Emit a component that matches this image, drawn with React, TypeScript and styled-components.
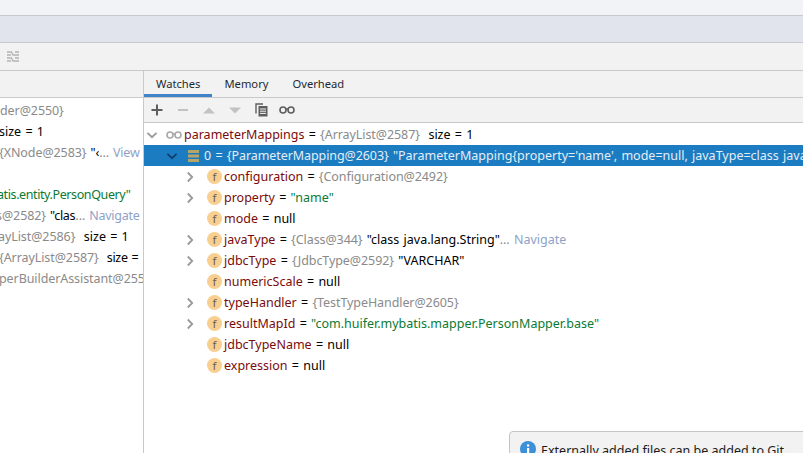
import React from "react";
import styled, { createGlobalStyle } from "styled-components";

const Global = createGlobalStyle`
  html, body { margin: 0; padding: 0; background: #fff; }
  body { width: 803px; height: 453px; overflow: hidden; font-family: "Noto Sans", "Open Sans", sans-serif; }
`;

const Page = styled.div`
  position: relative;
  width: 803px;
  height: 453px;
  overflow: hidden;
  display: flex;
  flex-direction: column;
`;
const TopStrip = styled.div`
  height: 15px;
  background: #f2f3f6;
  border-bottom: 1px solid #c8c9cc;
`;
const TabStrip = styled.div`
  height: 26px;
  background: #e1e4ec;
  border-bottom: 1px solid #c8c9cc;
`;
const DebugBar = styled.div`
  height: 27px;
  background: #f2f2f2;
  border-bottom: 1px solid #c8c9cc;
  display: flex;
  align-items: center;
  padding-left: 7px;
`;
const Panels = styled.div`
  flex: 1;
  display: flex;
  min-height: 0;
`;
const LeftPanel = styled.div`
  width: 143px;
  flex: none;
  border-right: 1px solid #c8c9cc;
  display: flex;
  flex-direction: column;
  overflow: hidden;
`;
const LeftHead = styled.div`
  height: 26px;
  flex: none;
  background: #f2f2f2;
  border-bottom: 1px solid #c8c9cc;
`;
const LeftList = styled.div`
  padding-top: 2px;
  display: flex;
  flex-direction: column;
`;
const LeftRow = styled.div<{ $shift: number; $tight?: number }>`
  height: 21px;
  line-height: 21px;
  white-space: pre;
  font-size: 12.5px;
  word-spacing: 1px;
  color: #000;
  margin-left: ${(p) => p.$shift}px;
  letter-spacing: ${(p) => -(p.$tight ?? 0)}px;
`;
const RightPanel = styled.div`
  flex: 1;
  min-width: 0;
  display: flex;
  flex-direction: column;
`;
const Tabs = styled.div`
  height: 26px;
  flex: none;
  display: flex;
  background: #f2f2f2;
  border-bottom: 1px solid #c8c9cc;
`;
const Tab = styled.div<{ $active?: boolean }>`
  padding: 0 12px;
  line-height: 26px;
  height: 26px;
  font-size: 11.2px;
  color: #1e2a33;
  box-sizing: content-box;
  box-shadow: ${(p) => (p.$active ? "inset 0 -3px 0 #4083c9" : "none")};
`;
const Toolbar = styled.div`
  height: 24px;
  flex: none;
  display: flex;
  background: #f2f2f2;
  border-bottom: 1px solid #c8c9cc;
`;
const ToolButton = styled.div`
  width: 26px;
  height: 24px;
  display: flex;
  align-items: center;
  justify-content: center;
`;
const Tree = styled.div`
  display: flex;
  flex-direction: column;
  padding-top: 1px;
`;
const Row = styled.div<{ $depth: number; $selected?: boolean }>`
  height: 21px;
  display: flex;
  align-items: center;
  white-space: pre;
  font-size: 12.5px;
  word-spacing: 1px;
  color: ${(p) => (p.$selected ? "#e4eef7" : "#000")};
  background: ${(p) => (p.$selected ? "#1b7cc2" : "transparent")};
  padding-left: ${(p) => p.$depth}px;
`;
const ArrowSlot = styled.div<{ $gap: number }>`
  width: 14px;
  height: 21px;
  flex: none;
  display: flex;
  align-items: center;
  justify-content: center;
  margin-right: ${(p) => p.$gap}px;
`;
const IconSlot = styled.div<{ $gap: number }>`
  flex: none;
  display: flex;
  align-items: center;
  margin-right: ${(p) => p.$gap}px;
`;
const FieldIcon = styled.div`
  width: 15px;
  height: 15px;
  border-radius: 50%;
  background: #f8cf8e;
  color: #6e6054;
  font-size: 11.5px;
  line-height: 15px;
  text-align: center;
`;
const Name = styled.span`
  color: #7a0b0b;
`;
const Gray = styled.span<{ $on?: boolean }>`
  color: ${(p) => (p.$on ? "#e4eef7" : "#8a8a8a")};
  letter-spacing: -0.08px;
`;
const Green = styled.span`
  color: #0b7a33;
`;
const Link = styled.span`
  color: #8ea2c8;
`;
const Notice = styled.div`
  position: absolute;
  left: 509px;
  top: 431px;
  width: 320px;
  height: 40px;
  background: #f2f2f2;
  border: 1px solid #c4c4c4;
  border-radius: 4px;
  display: flex;
  align-items: flex-start;
  padding: 9px 0 0 10px;
  gap: 5px;
  font-size: 12.5px;
  line-height: 20px;
  color: #1c1c1c;
  white-space: nowrap;
`;

const Chevron = ({ down }: { down?: boolean }) => (
  <svg width="12" height="12" viewBox="0 0 12 12" fill="none" stroke="#9a9a9a" strokeWidth="1.8">
    {down ? <path d="M1.5 3.8 6 8.2l4.5-4.4" /> : <path d="M3.8 1.5 8.2 6l-4.4 4.5" />}
  </svg>
);
const ChevronSel = () => (
  <svg width="12" height="12" viewBox="0 0 12 12" fill="none" stroke="#0f3f6a" strokeWidth="1.8">
    <path d="M1.5 3.8 6 8.2l4.5-4.4" />
  </svg>
);
const Glasses = ({ color }: { color: string }) => (
  <svg width="16" height="10" viewBox="0 0 16 10" fill="none" stroke={color} strokeWidth="1.6">
    <rect x="1" y="2" width="6" height="6" rx="3" />
    <rect x="9" y="2" width="6" height="6" rx="3" />
    <path d="M7 4h2" />
  </svg>
);
const ListIcon = () => (
  <svg width="11" height="12" viewBox="0 0 11 12" fill="#b5a569">
    <rect x="0" y="0" width="11" height="3" />
    <rect x="0" y="4.5" width="11" height="3" />
    <rect x="0" y="9" width="11" height="3" />
  </svg>
);
const DebugIcon = () => (
  <svg width="12" height="11" viewBox="0 0 12 11" fill="none" stroke="#b4b4b4" strokeWidth="1.3">
    <path d="M0 1h4.5l1.5 3H12M0 4h4M8 1h4M0 7h4.5L6 10h6M0 10h4M8 7h4" />
  </svg>
);
const Plus = () => (
  <svg width="12" height="12" viewBox="0 0 12 12" fill="#5e5e5e"><rect x="0.5" y="5" width="11" height="2" /><rect x="5" y="0.5" width="2" height="11" /></svg>
);
const Minus = () => (
  <svg width="12" height="12" viewBox="0 0 12 12" fill="#c2c2c2"><rect x="1" y="5" width="10" height="2" /></svg>
);
const Up = () => (
  <svg width="14" height="8" viewBox="0 0 14 8" fill="#c2c2c2"><path d="M7 1.5 13 7.5H1z" /></svg>
);
const Down = () => (
  <svg width="14" height="8" viewBox="0 0 14 8" fill="#c2c2c2"><path d="M7 7.5 13 1.5H1z" /></svg>
);
const Copy = () => (
  <svg width="13" height="14" viewBox="0 0 13 14" fill="none" stroke="#5e5e5e">
    <path d="M1 10.5V1h7" strokeWidth="1.4" />
    <rect x="3.5" y="3" width="9" height="10.5" fill="#5e5e5e" stroke="none" />
    <path d="M5 6h6M5 8.2h6M5 10.4h6" stroke="#f2f2f2" strokeWidth="1" />
  </svg>
);
const Info = () => (
  <svg width="16" height="16" viewBox="0 0 16 16">
    <circle cx="8" cy="8" r="8" fill="#3d8fd8" />
    <rect x="7" y="7" width="2.2" height="6" fill="#fff" />
    <rect x="7" y="3.4" width="2.2" height="2.2" fill="#fff" />
  </svg>
);

const Field = ({ open, children }: { open?: boolean; children: React.ReactNode }) => (
  <Row $depth={39}>
    <ArrowSlot $gap={10}>{open ? <Chevron /> : null}</ArrowSlot>
    <IconSlot $gap={2}><FieldIcon>f</FieldIcon></IconSlot>
    <span>{children}</span>
  </Row>
);

export default function App() {
  return (
    <Page>
      <Global />
      <TopStrip />
      <TabStrip />
      <DebugBar><DebugIcon /></DebugBar>
      <Panels>
        <LeftPanel>
          <LeftHead />
          <LeftList>
            <LeftRow $shift={0}><Gray>der@2550{"}"}</Gray></LeftRow>
            <LeftRow $shift={-1}>size = 1</LeftRow>
            <LeftRow $shift={-1} $tight={0.2}><Gray>{"{XNode@2583}"}</Gray> {"\"‹"}<Gray>...</Gray> <Link>View</Link></LeftRow>
            <LeftRow $shift={0}> </LeftRow>
            <LeftRow $shift={-3} $tight={0.4}><Green>atis.entity.PersonQuery"</Green></LeftRow>
            <LeftRow $shift={-4} $tight={0.25}><Gray>s@2582{"}"}</Gray> "clas<Gray>...</Gray> <Link>Navigate</Link></LeftRow>
            <LeftRow $shift={-2}><Gray>ayList@2586{"}"}</Gray>  size = 1</LeftRow>
            <LeftRow $shift={-1} $tight={0.3}><Gray>{"{ArrayList@2587}"}</Gray>  size = </LeftRow>
            <LeftRow $shift={-1}><Gray>perBuilderAssistant@2550{"}"}</Gray></LeftRow>
          </LeftList>
        </LeftPanel>
        <RightPanel>
          <Tabs>
            <Tab $active>Watches</Tab>
            <Tab>Memory</Tab>
            <Tab>Overhead</Tab>
          </Tabs>
          <Toolbar>
            <ToolButton><Plus /></ToolButton>
            <ToolButton><Minus /></ToolButton>
            <ToolButton><Up /></ToolButton>
            <ToolButton><Down /></ToolButton>
            <ToolButton><Copy /></ToolButton>
            <ToolButton><Glasses color="#5e5e5e" /></ToolButton>
          </Toolbar>
          <Tree>
            <Row $depth={1}>
              <ArrowSlot $gap={7}><Chevron down /></ArrowSlot>
              <IconSlot $gap={2}><Glasses color="#a8a8a8" /></IconSlot>
              <span><Name>parameterMappings</Name> = <Gray>{"{ArrayList@2587}"}</Gray>  size = 1</span>
            </Row>
            <Row $depth={21} $selected>
              <ArrowSlot $gap={9}><ChevronSel /></ArrowSlot>
              <IconSlot $gap={5}><ListIcon /></IconSlot>
              <span>0 = <Gray $on>{"{ParameterMapping@2603}"}</Gray> "ParameterMapping{"{"}property='name', mode=null, javaType=class java.lang.String</span>
            </Row>
            <Field open><Name>configuration</Name> = <Gray>{"{Configuration@2492}"}</Gray></Field>
            <Field open><Name>property</Name> = <Green>"name"</Green></Field>
            <Field><Name>mode</Name> = null</Field>
            <Field open><Name>javaType</Name> = <Gray>{"{Class@344}"}</Gray> "class java.lang.String"<Gray>...</Gray> <Link>Navigate</Link></Field>
            <Field open><Name>jdbcType</Name> = <Gray>{"{JdbcType@2592}"}</Gray> "VARCHAR"</Field>
            <Field><Name>numericScale</Name> = null</Field>
            <Field open><Name>typeHandler</Name> = <Gray>{"{TestTypeHandler@2605}"}</Gray></Field>
            <Field open><Name>resultMapId</Name> = <Green>"com.huifer.mybatis.mapper.PersonMapper.base"</Green></Field>
            <Field><Name>jdbcTypeName</Name> = null</Field>
            <Field><Name>expression</Name> = null</Field>
          </Tree>
        </RightPanel>
      </Panels>
      <Notice><Info /><span>Externally added files can be added to Git</span></Notice>
    </Page>
  );
}
